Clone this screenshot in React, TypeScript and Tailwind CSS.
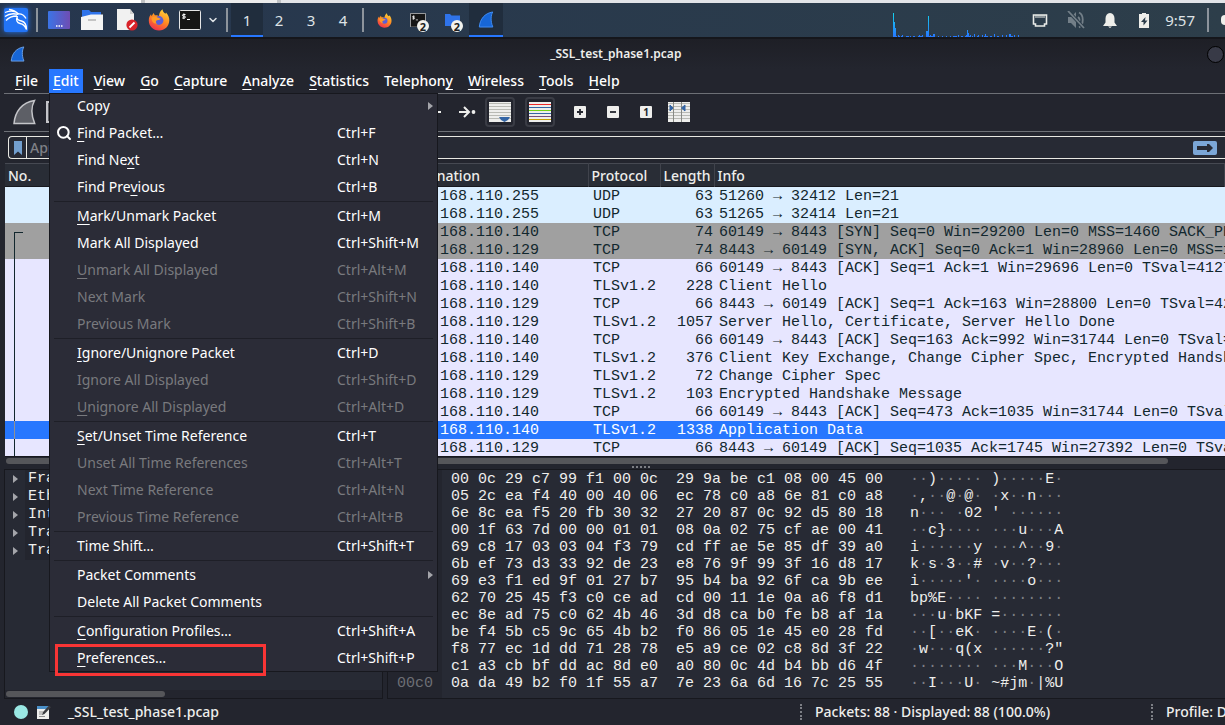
import { ReactNode } from "react";
import { ChevronDown, Search } from "lucide-react";

type MenuEntry = {
  label: string;
  hot?: number; // index of the underlined mnemonic
  keys?: string;
  off?: boolean;
  sub?: boolean;
  sep?: boolean; // separator above
};

const menuBar = [
  { label: "File", hot: 0 },
  { label: "Edit", hot: 0 },
  { label: "View", hot: 0 },
  { label: "Go", hot: 0 },
  { label: "Capture", hot: 0 },
  { label: "Analyze", hot: 0 },
  { label: "Statistics", hot: 0 },
  { label: "Telephony", hot: 8 },
  { label: "Wireless", hot: 0 },
  { label: "Tools", hot: 0 },
  { label: "Help", hot: 0 },
];

const editMenu: MenuEntry[] = [
  { label: "Copy", sub: true },
  { label: "Find Packet…", hot: 0, keys: "Ctrl+F" },
  { label: "Find Next", hot: 7, keys: "Ctrl+N" },
  { label: "Find Previous", hot: 8, keys: "Ctrl+B" },
  { label: "Mark/Unmark Packet", hot: 0, keys: "Ctrl+M", sep: true },
  { label: "Mark All Displayed", keys: "Ctrl+Shift+M" },
  { label: "Unmark All Displayed", hot: 0, keys: "Ctrl+Alt+M", off: true },
  { label: "Next Mark", keys: "Ctrl+Shift+N", off: true },
  { label: "Previous Mark", keys: "Ctrl+Shift+B", off: true },
  { label: "Ignore/Unignore Packet", hot: 0, keys: "Ctrl+D", sep: true },
  { label: "Ignore All Displayed", keys: "Ctrl+Shift+D", off: true },
  { label: "Unignore All Displayed", hot: 0, keys: "Ctrl+Alt+D", off: true },
  { label: "Set/Unset Time Reference", hot: 0, keys: "Ctrl+T", sep: true },
  { label: "Unset All Time References", keys: "Ctrl+Alt+T", off: true },
  { label: "Next Time Reference", keys: "Ctrl+Alt+N", off: true },
  { label: "Previous Time Reference", keys: "Ctrl+Alt+B", off: true },
  { label: "Time Shift…", keys: "Ctrl+Shift+T", sep: true },
  { label: "Packet Comments", sub: true, sep: true },
  { label: "Delete All Packet Comments" },
  { label: "Configuration Profiles…", hot: 0, keys: "Ctrl+Shift+A", sep: true },
  { label: "Preferences…", hot: 0, keys: "Ctrl+Shift+P" },
];

const packets = [
  ["192.168.110.255", "UDP", "63", "51260 → 32412 Len=21", "udp"],
  ["192.168.110.255", "UDP", "63", "51265 → 32414 Len=21", "udp"],
  ["192.168.110.140", "TCP", "74", "60149 → 8443 [SYN] Seq=0 Win=29200 Len=0 MSS=1460 SACK_PERM=1", "syn"],
  ["192.168.110.129", "TCP", "74", "8443 → 60149 [SYN, ACK] Seq=0 Ack=1 Win=28960 Len=0 MSS=1460", "syn"],
  ["192.168.110.140", "TCP", "66", "60149 → 8443 [ACK] Seq=1 Ack=1 Win=29696 Len=0 TSval=4127", "tcp"],
  ["192.168.110.140", "TLSv1.2", "228", "Client Hello", "tcp"],
  ["192.168.110.129", "TCP", "66", "8443 → 60149 [ACK] Seq=1 Ack=163 Win=28800 Len=0 TSval=4227", "tcp"],
  ["192.168.110.129", "TLSv1.2", "1057", "Server Hello, Certificate, Server Hello Done", "tcp"],
  ["192.168.110.140", "TCP", "66", "60149 → 8443 [ACK] Seq=163 Ack=992 Win=31744 Len=0 TSval=4127", "tcp"],
  ["192.168.110.140", "TLSv1.2", "376", "Client Key Exchange, Change Cipher Spec, Encrypted Handshake Message", "tcp"],
  ["192.168.110.129", "TLSv1.2", "72", "Change Cipher Spec", "tcp"],
  ["192.168.110.129", "TLSv1.2", "103", "Encrypted Handshake Message", "tcp"],
  ["192.168.110.140", "TCP", "66", "60149 → 8443 [ACK] Seq=473 Ack=1035 Win=31744 Len=0 TSval=4127", "tcp"],
  ["192.168.110.140", "TLSv1.2", "1338", "Application Data", "sel"],
  ["192.168.110.129", "TCP", "66", "8443 → 60149 [ACK] Seq=1035 Ack=1745 Win=27392 Len=0 TSval=4127", "tcp"],
];

const rowColors: Record<string, string> = {
  udp: "bg-[#daeeff] text-[#12272e]",
  syn: "bg-[#a0a0a0] text-[#12272e]",
  tcp: "bg-[#e7e6ff] text-[#12272e]",
  sel: "bg-[#2777ff] text-white",
};

const layers = ["Frame", "Ethernet II", "Internet Protocol", "Transmission Control", "Transport Layer"];

const hexRows = [
  "00 0c 29 c7 99 f1 00 0c 29 9a be c1 08 00 45 00",
  "05 2c ea f4 40 00 40 06 ec 78 c0 a8 6e 81 c0 a8",
  "6e 8c ea f5 20 fb 30 32 27 20 87 0c 92 d5 80 18",
  "00 1f 63 7d 00 00 01 01 08 0a 02 75 cf ae 00 41",
  "69 c8 17 03 03 04 f3 79 cd ff ae 5e 85 df 39 a0",
  "6b ef 73 d3 33 92 de 23 e8 76 9f 99 3f 16 d8 17",
  "69 e3 f1 ed 9f 01 27 b7 95 b4 ba 92 6f ca 9b ee",
  "62 70 25 45 f3 c0 ce ad cd 00 11 1e 0a a6 f8 d1",
  "ec 8e ad 75 c0 62 4b 46 3d d8 ca b0 fe b8 af 1a",
  "be f4 5b c5 9c 65 4b b2 f0 86 05 1e 45 e0 28 fd",
  "f8 77 ec 1d dd 71 28 78 e5 a9 ce 02 c8 8d 3f 22",
  "c1 a3 cb bf dd ac 8d e0 a0 80 0c 4d b4 bb d6 4f",
  "0a da 49 b2 f0 1f 55 a7 7e 23 6a 6d 16 7c 25 55",
];

// x, height of each bar in the cpu graph
const cpuBars = [
  [0, 24], [1, 15], [2, 9], [3, 1], [5, 2], [6, 1], [8, 1], [9, 2], [13, 1], [14, 1], [15, 1], [17, 1], [20, 1],
  [21, 1], [25, 1], [26, 2], [27, 1], [28, 1], [29, 2], [33, 6], [34, 6], [35, 21], [36, 1], [37, 2], [38, 1],
  [39, 1], [40, 3], [41, 3], [45, 1], [49, 1], [53, 1], [57, 1], [60, 1], [61, 1], [62, 1], [63, 1], [65, 2],
  [68, 1], [69, 1], [72, 1], [73, 2], [74, 7], [75, 4], [76, 1], [77, 2], [79, 1], [81, 3], [84, 1], [85, 2],
  [89, 2], [91, 1], [92, 3], [93, 1], [94, 1], [97, 1], [98, 1], [101, 3], [104, 1], [105, 1], [109, 2],
  [113, 2], [116, 3], [117, 3], [118, 1], [119, 1], [121, 2], [125, 2],
];

function Mnemonic({ label, hot }: { label: string; hot?: number }) {
  if (hot === undefined) return <>{label}</>;
  return (
    <>
      {label.slice(0, hot)}
      <span className="underline decoration-1 underline-offset-[3px] [text-decoration-skip-ink:none]">{label[hot]}</span>
      {label.slice(hot + 1)}
    </>
  );
}

function Firefox({ className }: { className: string }) {
  return (
    <svg viewBox="0 0 22 22" className={className} aria-hidden="true">
      <defs>
        <linearGradient id="fox" x1="0.8" y1="0" x2="0.3" y2="1">
          <stop offset="0" stopColor="#ffd93b" />
          <stop offset="0.5" stopColor="#ff8a22" />
          <stop offset="1" stopColor="#f0304e" />
        </linearGradient>
      </defs>
      <path
        d="M11 21.5C5 21.5.8 17 .8 11.5c0-3 1-4.800 2.200-6.200l.6 2L5.500 4l1.500 2.500c1.500-.4 3 0 4 .6 0-3 1.500-5.600 3.600-6.900 0 2.300 1.400 3.500 3 4.600l.4-1.400c2.500 2.600 3.400 5.300 3.300 8.200-.2 5.800-4.500 9.900-10.300 9.900z"
        fill="url(#fox)"
      />
      <circle cx="11" cy="11.500" r="4.400" fill="#5a5fd8" />
      <path d="M3.500 8.500c2-1.500 5-.8 7 .2l2.200 1c-1 1.300-2.400 1.300-3.600 1.500-1.600.4-1.600 2.200-.2 3.400-3 .3-5.600-2-5.400-6.100z" fill="#ff9a26" />
    </svg>
  );
}

function SharkFin({ className, fill, stroke }: { className: string; fill: string; stroke: string }) {
  return (
    <svg viewBox="0 0 24 26" className={className} aria-hidden="true">
      <path d="M2 24.500C3 12.500 10 3.500 22.500 1.500c-2.500 4.500-4 13 .2 23z" fill={fill} stroke={stroke} strokeWidth="1.500" />
    </svg>
  );
}

function Terminal({ className }: { className: string }) {
  return (
    <svg viewBox="0 0 22 20" className={className} aria-hidden="true">
      <rect x="0.5" y="0.5" width="21" height="19" rx="1" fill="#161616" stroke="#e6e6e6" />
      <path d="M6.500 4.500H4.200c-1 0-1 1.600 0 1.700h1.300c1.200 0 1.200 1.800 0 1.800H3.200M4.900 3.400v5.700M8 9.500h3" stroke="#fff" fill="none" />
    </svg>
  );
}

function Badge({ children }: { children: ReactNode }) {
  return (
    <span className="absolute right-[6px] bottom-[5px] flex size-3 items-center justify-center rounded-full bg-[#f2f2ee] text-[11px] leading-none font-bold text-[#1d1d1d]">
      {children}
    </span>
  );
}

function Divider() {
  return <span className="h-6 w-[2px] shrink-0 bg-[#8d949c]" />;
}

function Taskbar() {
  return (
    <header className="flex h-[34px] shrink-0 items-center overflow-hidden bg-linear-to-r from-[#26364e] to-[#2d3e4a] font-normal text-[#dfe3e6]">
      <div className="flex w-[231px] shrink-0 items-center gap-[10px] pl-1">
        <button aria-label="Applications" className="-mr-[2px] rounded-sm shadow-[0_0_5px_#2374f5]">
          <svg viewBox="0 0 24 24" className="size-6">
            <rect width="24" height="24" rx="2" fill="#2374f5" />
            <path
              d="M1 4.500c5-2 10-2 14 1.500M1 8.500c4-3 8-3.500 13-2M2 12.500c3-3.500 6-4.500 11-4.500M5 1.500c4 .5 7 2 9.500 4.500M14 6c4-.5 6 1 8 4.500M13.500 8c-1.500 3 1 4.500 4 5 3.500.8 5 4 5 8.500-1.500-4-3.500-5.500-6.500-6-3-.5-4.500-3.500-2.500-7.500z"
              fill="none"
              stroke="#fff"
              strokeWidth="1.300"
            />
          </svg>
        </button>
        <Divider />
        <button aria-label="Show desktop">
          <svg viewBox="0 0 22 18" className="w-[22px]">
            <defs>
              <linearGradient id="desk">
                <stop offset="0" stopColor="#3b74e6" />
                <stop offset="1" stopColor="#6f4db3" />
              </linearGradient>
            </defs>
            <rect width="22" height="18" rx="1" fill="url(#desk)" />
            <path d="M8 15h1.500M10.500 15H12M13 15h1.500" stroke="#fff" strokeWidth="1.500" />
          </svg>
        </button>
        <button aria-label="Files">
          <svg viewBox="0 0 24 20" className="w-6">
            <path d="M2 0h7l2 2h10v7H2z" fill="#2f73ea" />
            <path d="M1 7l10-2.500h12V20H1z" fill="#f4f4f4" />
            <path d="M8 10h8" stroke="#b5b5b5" strokeWidth="1.500" />
          </svg>
        </button>
        <button aria-label="Text editor" className="ml-[2px]">
          <svg viewBox="0 0 22 22" className="w-[22px]">
            <path d="M1 0h13l4 5v16H1z" fill="#f1f1f1" />
            <path d="M14 0l4 5h-4z" fill="#cfcfcf" />
            <circle cx="16" cy="16" r="5.600" fill="#d8232a" />
            <path d="M13.500 18.500l5-5" stroke="#fff" strokeWidth="1.800" />
          </svg>
        </button>
        <button aria-label="Firefox">
          <Firefox className="size-[22px]" />
        </button>
        <button aria-label="Terminal" className="-ml-px flex items-center gap-[6px]">
          <Terminal className="w-[22px]" />
          <ChevronDown className="size-3" strokeWidth={3} />
        </button>
      </div>
      <div className="-ml-[5px] flex h-full shrink-0 items-center gap-[3px]">
        <Divider />
        <div className="flex h-full text-[15px]">
          <button className="w-8 border-b-2 border-[#2777ff] bg-[#202d3d] pt-[2px]">1</button>
          <button className="w-8">2</button>
          <button className="w-8">3</button>
          <button className="w-8">4</button>
        </div>
        <Divider />
      </div>
      <nav className="ml-[3px] flex h-full shrink-0">
        <button aria-label="Firefox" className="flex w-[34px] items-center justify-center">
          <Firefox className="size-[15px]" />
        </button>
        <button aria-label="Terminal windows" className="relative flex w-[34px] items-center pl-[9px]">
          <Terminal className="w-4" />
          <Badge>2</Badge>
        </button>
        <button aria-label="File manager windows" className="relative flex w-[34px] items-center pl-[10px]">
          <svg viewBox="0 0 15 12" className="w-[15px]">
            <path d="M0 0h5l1.500 1.500H15V12H0z" fill="#2f73ea" />
          </svg>
          <Badge>2</Badge>
        </button>
        <button aria-label="Wireshark" className="flex w-[34px] items-center justify-center border-b-2 border-[#2777ff] bg-[#202d3d]">
          <SharkFin className="h-[17px]" fill="#1766d6" stroke="#3f8df5" />
        </button>
      </nav>
      <div className="ml-auto flex h-full shrink-0 items-center">
        <svg viewBox="0 0 127 34" className="mr-3 h-[34px] w-[127px]" shapeRendering="crispEdges">
          <defs>
            <linearGradient id="cpu" gradientUnits="userSpaceOnUse" x1="0" x2="0" y1="10" y2="34">
              <stop offset="0" stopColor="#14d3ee" />
              <stop offset="1" stopColor="#2777ff" />
            </linearGradient>
          </defs>
          {cpuBars.map(([x, h]) => (
            <rect key={x} x={x} y={34 - h} width="1" height={h} fill="url(#cpu)" />
          ))}
        </svg>
        <div className="flex items-center">
          <svg viewBox="0 0 16 13" className="w-4">
            <path d="M1.500 1h13v9h-2v2h-9v-2h-2z" fill="none" stroke="#e9ebe8" strokeWidth="1.600" />
            <path d="M4 1v3M6 1v3M8 1v3M10 1v3M12 1v3" stroke="#e9ebe8" />
          </svg>
          <svg viewBox="0 0 18 18" className="ml-[19px] w-[18px]">
            <path d="M1 6h3l5-5v16l-5-5H1z" fill="#737f88" />
            <path d="M11 6c2 1.500 2 4 0 6M12 1.500c5 2.500 5 12 0 15" fill="none" stroke="#737f88" strokeWidth="1.800" />
            <path d="M1 0l16 17" stroke="#2b3c4a" strokeWidth="3.500" />
            <path d="M1 0l16 17" stroke="#737f88" strokeWidth="1.800" />
          </svg>
          <svg viewBox="0 0 14 15" className="ml-[18px] w-[14px]">
            <path d="M7 0c3 .3 4.500 2.500 4.500 5.500v4L14 13H0l2.500-3.500v-4C2.500 2.500 4 .3 7 0zM5 13.600h4L7 15z" fill="#eeeeea" />
          </svg>
          <svg viewBox="0 0 10 15" className="ml-[22px] w-[10px]">
            <path d="M3 0h4v1h3v14H0V1h3z" fill="#eeeeea" />
            <path d="M6.500 4L2 9h2.500v3.500L8.500 7.500H6z" fill="#2b3c4a" />
          </svg>
          <time className="ml-4 text-[15px]">9:57</time>
        </div>
        <div className="ml-[12px] flex items-center">
          <Divider />
          <span className="ml-3 h-[10px] w-1 rounded-l-sm bg-[#eeeeea]" />
        </div>
      </div>
    </header>
  );
}

function EditMenu() {
  return (
    <div className="absolute top-full left-0 z-10 w-[389px] bg-[#2b2c37] text-[14px] font-normal outline-1 -outline-offset-1 outline-[#17181e]">
      {editMenu.map((item) => (
        <div key={item.label}>
          {item.sep && <div className="mx-[5px] h-[2px] border-t border-[#1e1f27]" />}
          <button
            disabled={item.off}
            className={`flex h-[27px] w-full items-center pr-[5px] pb-px pl-[7px] text-left ${item.off ? "text-[#797a7e]" : "text-white"}`}
          >
            <span className="w-[21px]">
              {item.label === "Find Packet…" && <Search className="size-4" strokeWidth={3} />}
            </span>
            <span className="w-[260px]">
              <Mnemonic label={item.label} hot={item.hot} />
            </span>
            <span>{item.keys}</span>
            {item.sub && <span className="ml-auto border-y-4 border-l-5 border-y-transparent border-l-[#a4a5aa]" />}
          </button>
        </div>
      ))}
      {/* highlight around Preferences */}
      <div className="absolute -bottom-1 left-[6px] h-8 w-[211px] border-3 border-[#f93535]" />
    </div>
  );
}

function Toolbar() {
  return (
    <div className="ml-1 flex h-[38px] shrink-0 items-center border-b border-[#6d7076] pb-px pl-2 text-[#eeeeec]">
      <button aria-label="Start capture">
        <SharkFin className="h-[26px]" fill="#5d5f66" stroke="#c4c5c9" />
      </button>
      <button aria-label="Stop capture" className="ml-[10px] size-[22px] border-2 border-[#c4c5c9] bg-[#5d5f66]" />
      <div className="ml-[357px] flex items-center">
        <button aria-label="Last packet" className="h-[2px] w-4 bg-[#eeeeec]" />
        <button aria-label="Auto scroll position" className="ml-[18px]">
          <svg viewBox="0 0 17 12" className="w-[17px]">
            <path d="M0 6h10M5 1l5 5-5 5" fill="none" stroke="#eeeeec" strokeWidth="2" />
            <circle cx="14.500" cy="6" r="1.900" fill="#eeeeec" />
          </svg>
        </button>
        <button aria-label="Auto scroll" aria-pressed="true" className="ml-[9px] flex h-[30px] w-[30px] items-center justify-center rounded-sm border-2 border-[#3a3c45]">
          <svg viewBox="0 0 22 20" className="h-5 w-[22px] shrink-0">
            <rect width="22" height="20" fill="#eeeeec" />
            <path d="M0 1.500h22M0 4.500h22M0 7.500h22M0 10.500h22M0 13.500h22M0 16.500h22" stroke="#b9bab4" />
            <path d="M10 15h11l-2 3-3.500 2-3.500-2z" fill="#3465a4" />
          </svg>
        </button>
        <button aria-label="Colorize" aria-pressed="true" className="ml-[10px] flex h-[30px] w-[30px] items-center justify-center rounded-sm border-2 border-[#3a3c45]">
          <svg viewBox="0 0 22 20" className="h-5 w-[22px] shrink-0" shapeRendering="crispEdges">
            <rect width="22" height="20" fill="#eeeeec" />
            <path d="M0 2h22v1H0z" fill="#ef2929" />
            <path d="M0 5h22v1H0zM0 11h22v1H0z" fill="#3465a4" />
            <path d="M0 8h22v1H0z" fill="#73d216" />
            <path d="M0 14h22v1H0z" fill="#75507b" />
            <path d="M0 17h22v1H0z" fill="#c4a000" />
          </svg>
        </button>
        <div className="ml-[19px] flex gap-[21px]">
          <button aria-label="Zoom in">
            <svg viewBox="0 0 12 12" className="size-3">
              <rect width="12" height="12" rx="1" fill="#eeeeec" />
              <path d="M3 6h6M6 3v6" stroke="#23252e" strokeWidth="1.800" />
            </svg>
          </button>
          <button aria-label="Zoom out">
            <svg viewBox="0 0 12 12" className="size-3">
              <rect width="12" height="12" rx="1" fill="#eeeeec" />
              <path d="M3 6h6" stroke="#23252e" strokeWidth="1.800" />
            </svg>
          </button>
          <button aria-label="Normal size" className="flex size-3 items-center justify-center rounded-[1px] bg-[#eeeeec] text-[10px] leading-none font-bold text-[#23252e]">
            1
          </button>
        </div>
        <button aria-label="Resize columns" className="ml-4">
          <svg viewBox="0 0 22 20" className="h-5 w-[22px]">
            <rect width="22" height="20" fill="#eeeeec" />
            <path d="M0 1.500h22M0 4.500h22M0 7.500h22M0 10.500h22M0 13.500h22M0 16.500h22" stroke="#b9bab4" />
            <path d="M5.500 0v20M13.500 0v20" stroke="#888a85" />
            <path d="M2 3l3 3-3 3zM17 3l-3.500 3 3.500 3z" fill="#3465a4" stroke="#3465a4" />
          </svg>
        </button>
      </div>
    </div>
  );
}

function FilterBar() {
  return (
    <div className="flex h-[31px] shrink-0 items-start pt-1 pl-2">
      <div className="flex h-[23px] flex-1 items-center rounded-l-sm border border-r-0 border-[#e8e8e2] bg-[#272a34]">
        <button aria-label="Bookmarks" className="flex h-full w-[18px] shrink-0 items-center justify-center border-r border-[#e8e8e2]">
          <svg viewBox="0 0 8 14" className="w-2">
            <path d="M0 0h8v14l-4-3.500L0 14z" fill="#729fcf" />
          </svg>
        </button>
        <input
          aria-label="Display filter"
          placeholder="Apply a display filter … <Ctrl-/>"
          className="min-w-0 flex-1 bg-transparent px-[3px] outline-none placeholder:text-[#7f8086]"
        />
        <button aria-label="Apply filter" className="mr-2 flex h-[14px] w-6 items-center justify-center rounded-[2px] bg-[#7ba6d6]">
          <svg viewBox="0 0 16 8" className="w-4">
            <path d="M0 2h10V0h2l4 4-4 4h-2V6H0z" fill="#272a34" />
          </svg>
        </button>
      </div>
    </div>
  );
}

function PacketList() {
  return (
    <section className="relative ml-[5px] h-[293px] shrink-0 overflow-hidden">
      <table className="w-full table-fixed border-collapse text-left">
        <colgroup>
          <col className="w-[75px]" />
          <col className="w-[160px]" />
          <col className="w-[159px]" />
          <col className="w-[189px]" />
          <col className="w-[72px]" />
          <col className="w-[54px]" />
          <col />
        </colgroup>
        <thead>
          <tr className="h-[23px] border-t border-b border-t-[#464952] border-b-[#17181e] bg-[#292d36] text-[#eeeeec]">
            {["No.", "Time", "Source", "Destination", "Protocol", "Length", "Info"].map((name) => (
              <th key={name} className="border-r border-[#40434c] p-0 pl-[3px] leading-[21px] font-medium whitespace-nowrap">
                {name}
              </th>
            ))}
          </tr>
        </thead>
        <tbody className="font-['Liberation_Mono',monospace] text-[15px]">
          {packets.map(([dst, proto, len, info, kind], i) => (
            <tr key={i} className={`h-[18px] leading-[17px] whitespace-pre ${rowColors[kind]}`}>
              <td className="p-0" />
              <td className="p-0" />
              <td className="p-0" />
              <td className="p-0 pt-px pl-[5px]">{dst}</td>
              <td className="p-0 pt-px pl-[5px]">{proto}</td>
              <td className="p-0 pt-px pr-[1px] text-right">{len}</td>
              <td className="overflow-hidden p-0 pt-px pl-[5px]">{info}</td>
            </tr>
          ))}
        </tbody>
      </table>
      {/* conversation bracket */}
      <div className="absolute top-[69px] bottom-0 left-[9px] w-[9px] border-t border-l border-[#12272e]">
        <span className="mt-[188px] -ml-px block h-[18px] w-px bg-[#8f9094]" />
      </div>
    </section>
  );
}

function HexDump() {
  return (
    <div className="flex flex-1 overflow-hidden border border-r-0 border-[#17181e] bg-[#272a34] font-['Liberation_Mono',monospace] text-[15px] leading-[17px] whitespace-pre">
      <div className="w-[54px] shrink-0 bg-[#23252e] pt-px pl-[9px] text-[#6d6f75]">
        {hexRows.map((_, i) => (
          <div key={i}>{(i * 16).toString(16).padStart(4, "0")}</div>
        ))}
      </div>
      <div className="pt-px pl-[9px] text-[#eeeeec]">
        {hexRows.map((row, i) => {
          const bytes = row.split(" ");
          return (
            <div key={i}>
              {bytes.slice(0, 8).join(" ") + "  " + bytes.slice(8).join(" ") + "   "}
              {bytes.map((b, n) => {
                const code = parseInt(b, 16);
                const shown = code >= 0x20 && code < 0x7f;
                return (
                  <span key={n} className={shown ? "" : "text-[#7c7e84]"}>
                    {(n === 8 ? " " : "") + (shown ? String.fromCharCode(code) : "·")}
                  </span>
                );
              })}
            </div>
          );
        })}
      </div>
    </div>
  );
}

export default function App() {
  return (
    <div className="flex h-screen flex-col overflow-hidden bg-[#23252e] font-['Noto_Sans',sans-serif] text-[14px] leading-5 font-medium text-white">
      <div className="flex h-[3px] shrink-0 gap-1 bg-[#bfc1c4]">
        <div className="w-[141px] bg-white" />
        <div className="w-[132px] bg-[#ececec]" />
        <div className="flex-1 bg-[#e2e4e8]" />
      </div>
      <Taskbar />

      <div className="flex h-8 shrink-0 items-center border-t-2 border-[#15161b] bg-linear-to-b from-[#1e1f26] to-[#23252e] pl-[10px]">
        <SharkFin className="h-4" fill="#1766d6" stroke="#6ea3e8" />
        <h1 className="flex-1 text-center text-[12px] font-semibold text-[#eeeeec]">_SSL_test_phase1.pcap</h1>
        <button aria-label="Close window" className="mr-px size-[17px] rounded-full border border-black bg-[#383a47]" />
      </div>

      <nav className="flex h-6 shrink-0 gap-[7px] pl-[11px]">
        {menuBar.map(({ label, hot }) => (
          <div key={label} className="relative">
            <button className={`h-6 px-1 ${label === "Edit" ? "bg-[#2777ff]" : ""}`}>
              <Mnemonic label={label} hot={hot} />
            </button>
            {label === "Edit" && <EditMenu />}
          </div>
        ))}
      </nav>
      <div className="ml-1 h-px shrink-0 bg-[#6d7076]" />

      <Toolbar />
      <FilterBar />
      <PacketList />
      <div className="ml-[5px] flex h-[8px] shrink-0 items-center border-t border-[#17181e]">
        <div className="ml-px h-[6px] w-[1162px] rounded-full bg-[#55565a]" />
      </div>
      <div className="flex h-[5px] shrink-0 items-center justify-center pl-14">
        <span className="w-[18px] border-t-2 border-dotted border-[#7d7f85]" />
      </div>

      <main className="flex min-h-0 flex-1 gap-1 pl-1">
        <section className="flex w-[379px] shrink-0 flex-col border border-[#17181e] bg-[#272a34]">
          <ul className="flex-1 font-['Liberation_Mono',monospace] text-[15px] leading-[18px] text-[#eeeeec]">
            {layers.map((name) => (
              <li key={name} className="flex items-center pl-2">
                <span className="border-y-4 border-l-5 border-y-transparent border-l-[#a4a5aa]" />
                <span className="ml-[7px] flex-1 bg-[#23252e] pl-[3px] whitespace-nowrap">{name}</span>
              </li>
            ))}
          </ul>
          <div className="flex h-2 items-center bg-[#23252e] pl-px">
            <div className="h-[6px] w-[159px] rounded-full bg-[#55565a]" />
          </div>
        </section>
        <HexDump />
      </main>

      <footer className="flex h-[26px] shrink-0 items-center overflow-hidden pl-[14px] whitespace-nowrap text-[#eeeeec]">
        <button aria-label="Expert info" className="size-[14px] rounded-full bg-[#9ae8e4]" />
        <button aria-label="Capture comments" className="ml-[9px]">
          <svg viewBox="0 0 14 15" className="w-[14px]">
            <path d="M0 1h12v13H0z" fill="#eeeeec" />
            <path d="M0 1h12v3H0z" fill="#4a90c8" />
            <path d="M2 7h4M2 9h3M2 11.500h6" stroke="#8f8f8f" />
            <path d="M5 10l1-3 6-6.500 2 1.800L7.500 9z" fill="#3a3c40" />
          </svg>
        </button>
        <span className="ml-[17px] flex-1">_SSL_test_phase1.pcap</span>
        <span className="flex w-[351px] items-center gap-[13px]">
          <span className="h-4 border-l-2 border-dotted border-[#7d7f85]" />
          Packets: 88 · Displayed: 88 (100.0%)
        </span>
        <span className="flex w-[74px] items-center gap-[13px]">
          <span className="h-4 border-l-2 border-dotted border-[#7d7f85]" />
          Profile: Default
        </span>
      </footer>
    </div>
  );
}
